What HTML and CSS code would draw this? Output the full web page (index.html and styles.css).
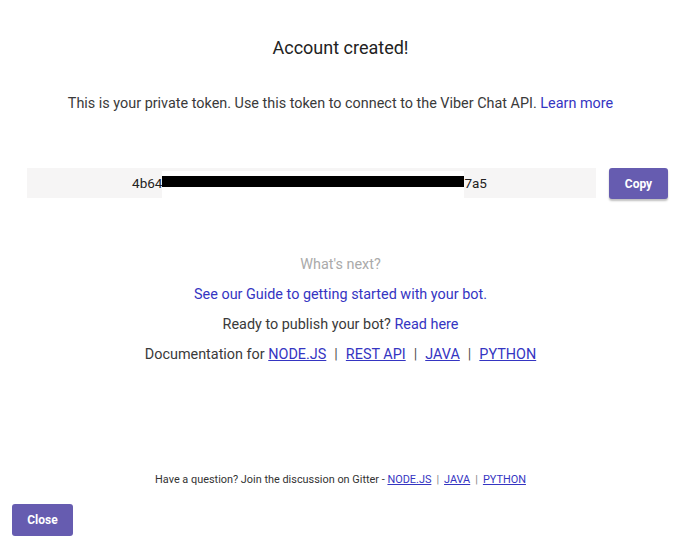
FILE: index.html
```html
<!DOCTYPE html>
<html>
<head>
<meta charset="utf-8">
<link rel="stylesheet" href="styles.css">
</head>
<body>
<div class="dialog">
  <h1 class="title">Account created!</h1>
  <p class="intro">This is your private token. Use this token to connect to the Viber Chat API. <a href="#" class="link">Learn more</a></p>
  <div class="token-row">
    <div class="token-box"><span class="tok">4b64</span><span class="redact"><span class="bar"></span></span><span class="tok">7a5</span></div>
    <button class="btn">Copy</button>
  </div>
  <div class="next">
    <p class="muted">What's next?</p>
    <p><a href="#" class="link">See our Guide to getting started with your bot.</a></p>
    <p>Ready to publish your bot? <a href="#" class="link">Read here</a></p>
    <p>Documentation for <a href="#" class="ulink">NODE.JS</a><span class="sep">|</span><a href="#" class="ulink">REST API</a><span class="sep">|</span><a href="#" class="ulink">JAVA</a><span class="sep">|</span><a href="#" class="ulink">PYTHON</a></p>
  </div>
  <p class="footer">Have a question? Join the discussion on Gitter - <a href="#" class="ulink">NODE.JS</a><span class="fsep">|</span><a href="#" class="ulink">JAVA</a><span class="fsep">|</span><a href="#" class="ulink">PYTHON</a></p>
  <div class="actions"><button class="btn close">Close</button></div>
</div>
</body>
</html>
```

FILE: styles.css
```css
html, body {
  margin: 0;
  padding: 0;
  background: #fff;
}
body {
  font-family: Roboto, "Liberation Sans", sans-serif;
  color: #3a3a3a;
  font-size: 14.4px;
}
.dialog {
  width: 687px;
  height: 547px;
  display: flex;
  flex-direction: column;
  box-sizing: border-box;
  padding: 0 18px 0 12px;
}
.title {
  margin: 37px 0 0;
  font-size: 18px;
  font-weight: 400;
  line-height: 22px;
  text-align: center;
  color: #222;
}
.intro {
  margin: 35px 0 0;
  line-height: 20px;
  text-align: center;
}
.link {
  color: #3535c2;
  text-decoration: none;
}
.ulink {
  color: #3535c2;
  text-decoration: underline;
}
.token-row {
  margin-top: 54px;
  display: flex;
  align-items: flex-start;
  padding-left: 15px;
}
.token-box {
  width: 569px;
  height: 30px;
  background: #f6f5f5;
  display: flex;
  align-items: center;
  justify-content: center;
  font-size: 13.5px;
  color: #222;
  padding-right: 4px;
  box-sizing: border-box;
}
.tok {
  line-height: 30px;
}
.redact {
  display: flex;
  align-items: center;
  width: 302px;
  height: 28px;
  margin-top: 4px;
  background: #fff;
  justify-content: center;
}
.bar {
  display: block;
  width: 306px;
  height: 11px;
  margin-top: -8px;
  background: #000;
}
.btn {
  font-family: Roboto, "Liberation Sans", sans-serif;
  background: #665cb0;
  color: #fff;
  border: none;
  border-radius: 3px;
  font-size: 12px;
  font-weight: 700;
  height: 31px;
  padding: 0;
  width: 59px;
  margin-left: 13px;
  box-shadow: 0 2px 2px rgba(0,0,0,0.25);
}
.next {
  margin-top: 51px;
  text-align: center;
}
.next p {
  margin: 0;
  line-height: 30px;
}
.next p.muted {
  color: #aaa;
}
.sep {
  margin: 0 8px;
  color: #555;
}
.footer {
  margin: 103px 0 0;
  text-align: center;
  font-size: 10.9px;
  color: #333;
  line-height: 14px;
}
.fsep {
  margin: 0 5px;
  color: #888;
}
.actions {
  margin-top: 17px;
}
.close {
  margin-left: 0;
  width: 61px;
  height: 32px;
  box-shadow: none;
}
```
